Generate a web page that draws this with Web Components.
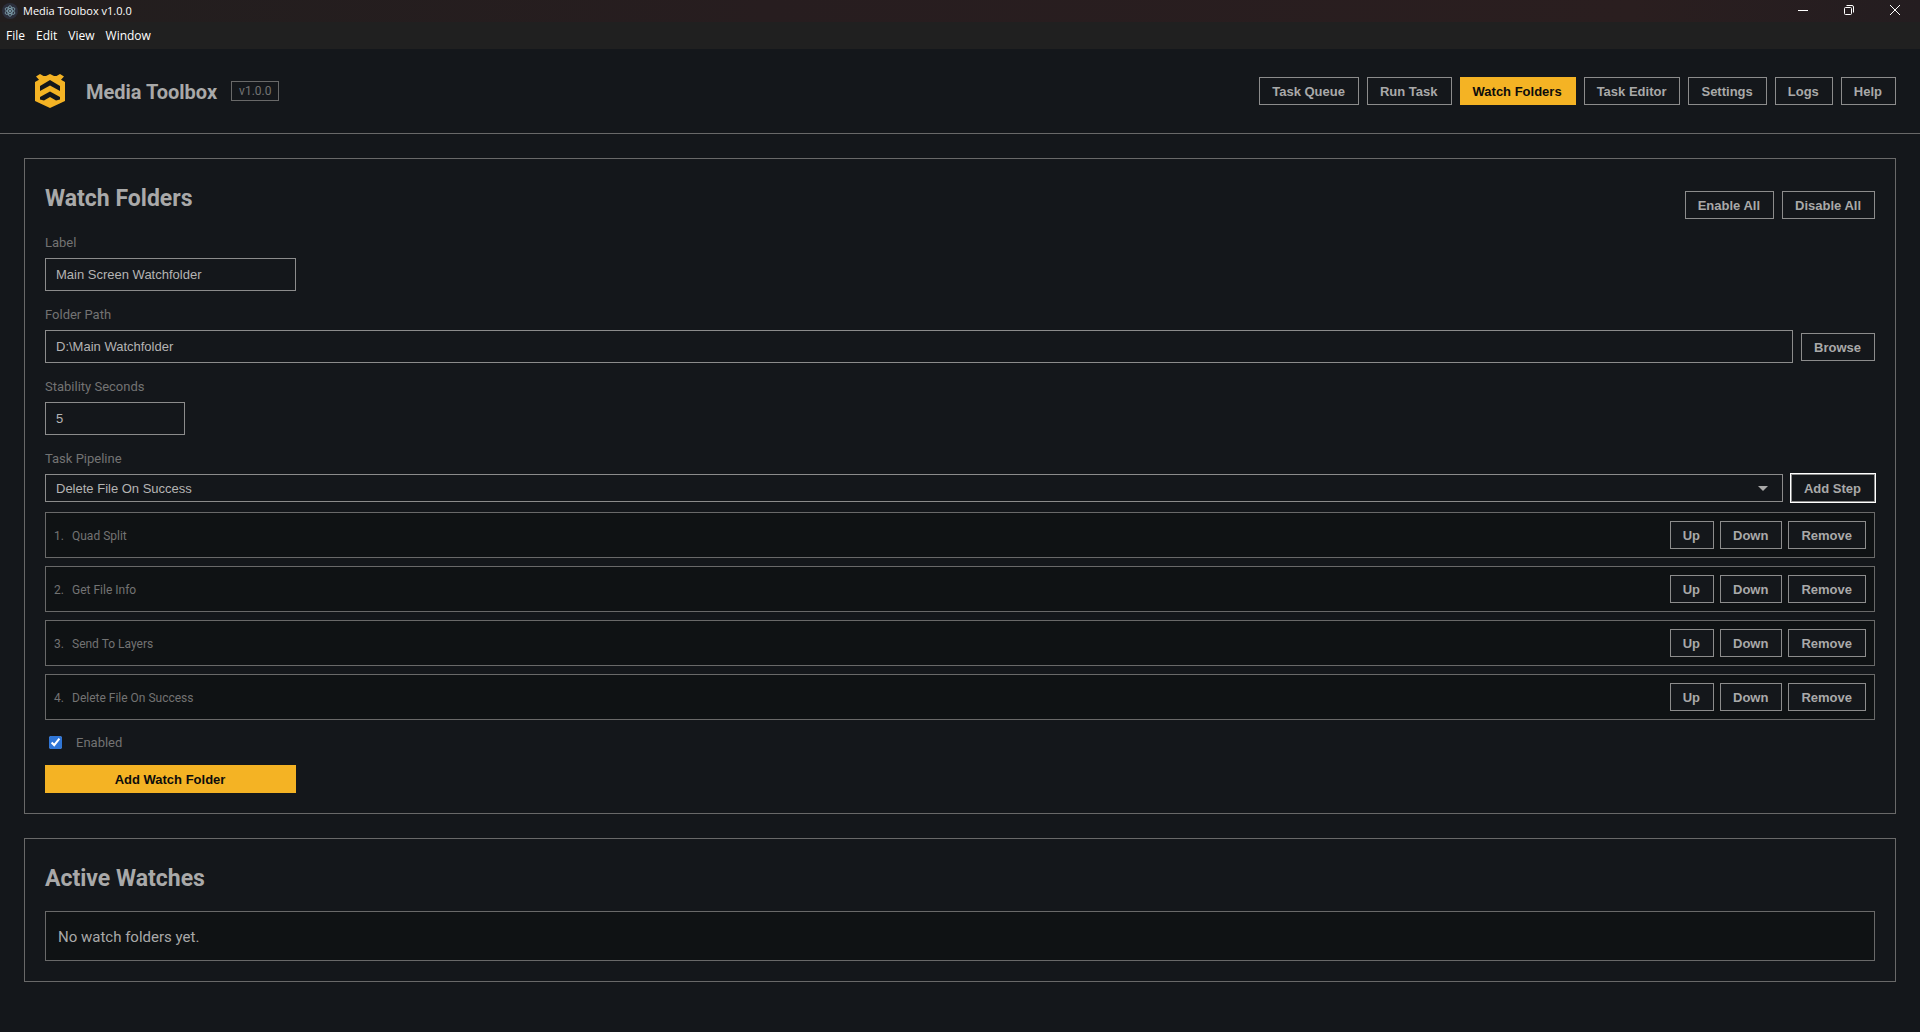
<!DOCTYPE html>
<html lang="en">
<head>
<meta charset="UTF-8">
<meta name="viewport" content="width=device-width, initial-scale=1.0">
<title>Media Toolbox v1.0.0</title>
<style>
  :root {
    --bg: #14171b;
    --row-bg: #0f1214;
    --line: #696969;
    --control-line: #8c8c8c;
    --text: #a9a9a9;
    --muted: #737373;
    --accent: #f4b324;
    --ui-font: "Liberation Sans", Arial, sans-serif;
    --body-font: Roboto, sans-serif;
  }
  body {
    margin: 0;
    min-height: 100vh;
    background: var(--bg);
    color: var(--text);
    font-family: var(--body-font);
  }
</style>
</head>
<body>
<media-toolbox></media-toolbox>

<script>
// Base class: clones a style + markup string into an open shadow root
class BaseElement extends HTMLElement {
  constructor() {
    super();
    const template = document.createElement('template');
    template.innerHTML = this.render();
    this.attachShadow({ mode: 'open' }).appendChild(template.content.cloneNode(true));
  }
}

// Desktop window title bar
class WindowBar extends BaseElement {
  render() {
    return `
      <style>
        :host {
          display: flex;
          align-items: center;
          height: 22px;
          padding-right: 2px;
          background: linear-gradient(90deg, #221e1e, #271d1f 40%, #2a1e1f 85%, #241d20);
          color: #fff;
          font: 11px/22px "Open Sans", sans-serif;
        }
        .icon { width: 16px; height: 16px; margin: 0 5px 0 2px; }
        .title { flex: 1; }
        button {
          width: 46px;
          height: 22px;
          padding: 0 0 2px;
          border: 0;
          background: none;
          color: #fff;
        }
        button svg { display: block; margin: 0 auto; }
      </style>
      <svg class="icon" viewBox="0 0 16 16" fill="none" stroke="#8fb6c2" stroke-width=".7">
        <circle cx="8" cy="8" r="8" fill="#2b2e3b" stroke="none"/>
        <ellipse cx="8" cy="8" rx="5.4" ry="2.2" transform="rotate(30 8 8)"/>
        <ellipse cx="8" cy="8" rx="5.4" ry="2.2" transform="rotate(90 8 8)"/>
        <ellipse cx="8" cy="8" rx="5.4" ry="2.2" transform="rotate(150 8 8)"/>
        <circle cx="8" cy="8" r=".7" fill="#8fb6c2"/>
      </svg>
      <span class="title"><slot></slot></span>
      <button aria-label="Minimize"><svg width="10" height="10" stroke="currentColor"><path d="M0 5.5h10"/></svg></button>
      <button aria-label="Restore"><svg width="10" height="10" fill="none" stroke="currentColor"><rect x=".5" y="2.5" width="7" height="7" rx="1"/><path d="M2.5 .5H8A1.5 1.5 0 0 1 9.5 2v5.5"/></svg></button>
      <button aria-label="Close"><svg width="10" height="10" stroke="currentColor"><path d="M0 0l10 10M10 0L0 10"/></svg></button>
    `;
  }
}
customElements.define('window-bar', WindowBar);

// File / Edit / View / Window
class MenuBar extends BaseElement {
  render() {
    return `
      <style>
        :host {
          display: flex;
          gap: 11px;
          height: 27px;
          padding-left: 6px;
          background: #202020;
        }
        button {
          padding: 0;
          border: 0;
          background: none;
          color: #fff;
          font: 12px/27px "Open Sans", sans-serif;
        }
      </style>
      <button>File</button><button>Edit</button><button>View</button><button>Window</button>
    `;
  }
}
customElements.define('menu-bar', MenuBar);

// Push button: variant="primary" is filled, "focused" has a ring
class ToolButton extends BaseElement {
  render() {
    return `
      <style>
        :host { display: block; }
        button {
          display: block;
          width: 100%;
          height: 28px;
          padding: 1px 13px 0 12px;
          border: 1px solid var(--control-line);
          border-radius: 0;
          background: var(--bg);
          color: var(--text);
          font: bold 13px/25px var(--ui-font);
          white-space: nowrap;
          cursor: pointer;
        }
        :host([variant="primary"]) button {
          border-color: var(--accent);
          background: var(--accent);
          color: #0c0c0c;
        }
        :host([variant="focused"]) button { outline: 1px solid #fff; }
      </style>
      <button type="button"><slot></slot></button>
    `;
  }
}
customElements.define('tool-button', ToolButton);

class AppHeader extends BaseElement {
  render() {
    return `
      <style>
        :host {
          display: flex;
          align-items: center;
          justify-content: space-between;
          padding: 24px;
          border-bottom: 1px solid var(--line);
        }
        .brand { display: flex; align-items: center; height: 36px; }
        .logo { width: 30px; height: 34px; margin: 0 21px 0 11px; }
        h1 { margin: 0 14px 0 0; padding-top: 2px; font-size: 20px; line-height: 36px; }
        .version {
          box-sizing: border-box;
          height: 20px;
          padding: 0 7px;
          border: 1px solid var(--line);
          color: var(--muted);
          font-size: 12px;
          line-height: 18px;
        }
        nav { display: flex; gap: 8px; }
      </style>
      <div class="brand">
        <svg class="logo" viewBox="0 0 30 34" fill="#f4b324">
          <path d="M1 2.600L5 0l3.500 2L11 2l4-2 4 2h2.500L25 0l4 2.600-3 3.200 4 2.200v19l-15 7-15-7V8l4-2.200z"/>
          <path d="M15 6L5 12v5l10-5.500L25 17v-5zM15 17.500L5 23v2.500l4 1 6-3.500 6 3.500 4-1V23z" fill="#14171b"/>
        </svg>
        <h1>Media Toolbox</h1>
        <span class="version">v1.0.0</span>
      </div>
      <nav>
        <tool-button>Task Queue</tool-button>
        <tool-button>Run Task</tool-button>
        <tool-button variant="primary">Watch Folders</tool-button>
        <tool-button>Task Editor</tool-button>
        <tool-button>Settings</tool-button>
        <tool-button>Logs</tool-button>
        <tool-button>Help</tool-button>
      </nav>
    `;
  }
}
customElements.define('app-header', AppHeader);

// Bordered panel with a heading and an actions slot
class ContentPanel extends BaseElement {
  render() {
    return `
      <style>
        :host {
          display: block;
          padding: 20px;
          border: 1px solid var(--line);
        }
        .head {
          display: flex;
          justify-content: space-between;
          height: 40px;
          margin-bottom: 12px;
        }
        h2 { margin: 0; font-size: 23px; line-height: 40px; }
        .actions { display: flex; align-items: flex-end; gap: 8px; }
      </style>
      <div class="head">
        <h2><slot name="heading"></slot></h2>
        <div class="actions"><slot name="actions"></slot></div>
      </div>
      <slot></slot>
    `;
  }
}
customElements.define('content-panel', ContentPanel);

// One step of the task pipeline
class PipelineStep extends BaseElement {
  render() {
    return `
      <style>
        :host {
          display: flex;
          align-items: center;
          gap: 6px;
          padding: 8px;
          border: 1px solid var(--line);
          background: var(--row-bg);
          color: var(--muted);
          font-size: 12px;
        }
        span { padding-top: 2px; }
        .number { width: 12px; }
        .name { flex: 1; }
      </style>
      <span class="number"></span>
      <span class="name"><slot></slot></span>
      <tool-button>Up</tool-button>
      <tool-button>Down</tool-button>
      <tool-button>Remove</tool-button>
    `;
  }
  connectedCallback() {
    this.shadowRoot.querySelector('.number').textContent = this.getAttribute('number') + '.';
  }
}
customElements.define('pipeline-step', PipelineStep);

class WatchForm extends BaseElement {
  render() {
    return `
      <style>
        :host { display: block; }
        form { display: grid; gap: 12px; }
        .field { display: grid; gap: 4px; }
        label { color: var(--muted); font-size: 13px; line-height: 23px; }
        .line { display: flex; align-items: center; gap: 8px; }
        .grow { flex: 1; }
        input[type="text"], input[type="number"], select {
          box-sizing: border-box;
          height: 33px;
          padding: 0 10px;
          border: 1px solid var(--control-line);
          border-radius: 0;
          background: var(--bg);
          color: #b4b4b4;
          font: 13px var(--ui-font);
        }
        #label { width: 251px; }
        #seconds { width: 140px; appearance: textfield; }
        .select { position: relative; }
        select { display: block; width: 100%; height: 28px; appearance: none; }
        /* drop-down arrow over the select */
        .select svg { position: absolute; right: 15px; top: 12px; }
        .steps { display: grid; gap: 8px; margin-top: 6px; }
        .check { display: flex; align-items: center; gap: 14px; height: 21px; padding-left: 4px; }
        .check input { width: 13px; height: 13px; margin: 0; accent-color: #2f75d6; }
        .submit { width: 251px; }
      </style>
      <form>
        <div class="field">
          <label for="label">Label</label>
          <input type="text" id="label" value="Main Screen Watchfolder">
        </div>
        <div class="field">
          <label for="path">Folder Path</label>
          <div class="line">
            <input type="text" id="path" class="grow" value="D:\\Main Watchfolder">
            <tool-button>Browse</tool-button>
          </div>
        </div>
        <div class="field">
          <label for="seconds">Stability Seconds</label>
          <input type="number" id="seconds" value="5">
        </div>
        <div class="field">
          <label for="task">Task Pipeline</label>
          <div class="line">
            <div class="select grow">
              <select id="task"><option>Delete File On Success</option></select>
              <svg width="10" height="5" fill="#a9a9a9"><path d="M0 0h10L5 5z"/></svg>
            </div>
            <tool-button variant="focused">Add Step</tool-button>
          </div>
          <div class="steps">
            <pipeline-step number="1">Quad Split</pipeline-step>
            <pipeline-step number="2">Get File Info</pipeline-step>
            <pipeline-step number="3">Send To Layers</pipeline-step>
            <pipeline-step number="4">Delete File On Success</pipeline-step>
          </div>
        </div>
        <div class="check">
          <input type="checkbox" id="enabled" checked>
          <label for="enabled">Enabled</label>
        </div>
        <tool-button class="submit" variant="primary">Add Watch Folder</tool-button>
      </form>
    `;
  }
}
customElements.define('watch-form', WatchForm);

class MediaToolbox extends BaseElement {
  render() {
    return `
      <style>
        :host { display: block; }
        main { display: grid; gap: 24px; padding: 24px; }
        .empty {
          padding: 13px 12px 11px;
          border: 1px solid var(--line);
          background: var(--row-bg);
          font-size: 15px;
          line-height: 24px;
        }
      </style>
      <window-bar>Media Toolbox v1.0.0</window-bar>
      <menu-bar></menu-bar>
      <app-header></app-header>
      <main>
        <content-panel>
          <span slot="heading">Watch Folders</span>
          <tool-button slot="actions">Enable All</tool-button>
          <tool-button slot="actions">Disable All</tool-button>
          <watch-form></watch-form>
        </content-panel>
        <content-panel>
          <span slot="heading">Active Watches</span>
          <div class="empty">No watch folders yet.</div>
        </content-panel>
      </main>
    `;
  }
}
customElements.define('media-toolbox', MediaToolbox);
</script>
</body>
</html>
